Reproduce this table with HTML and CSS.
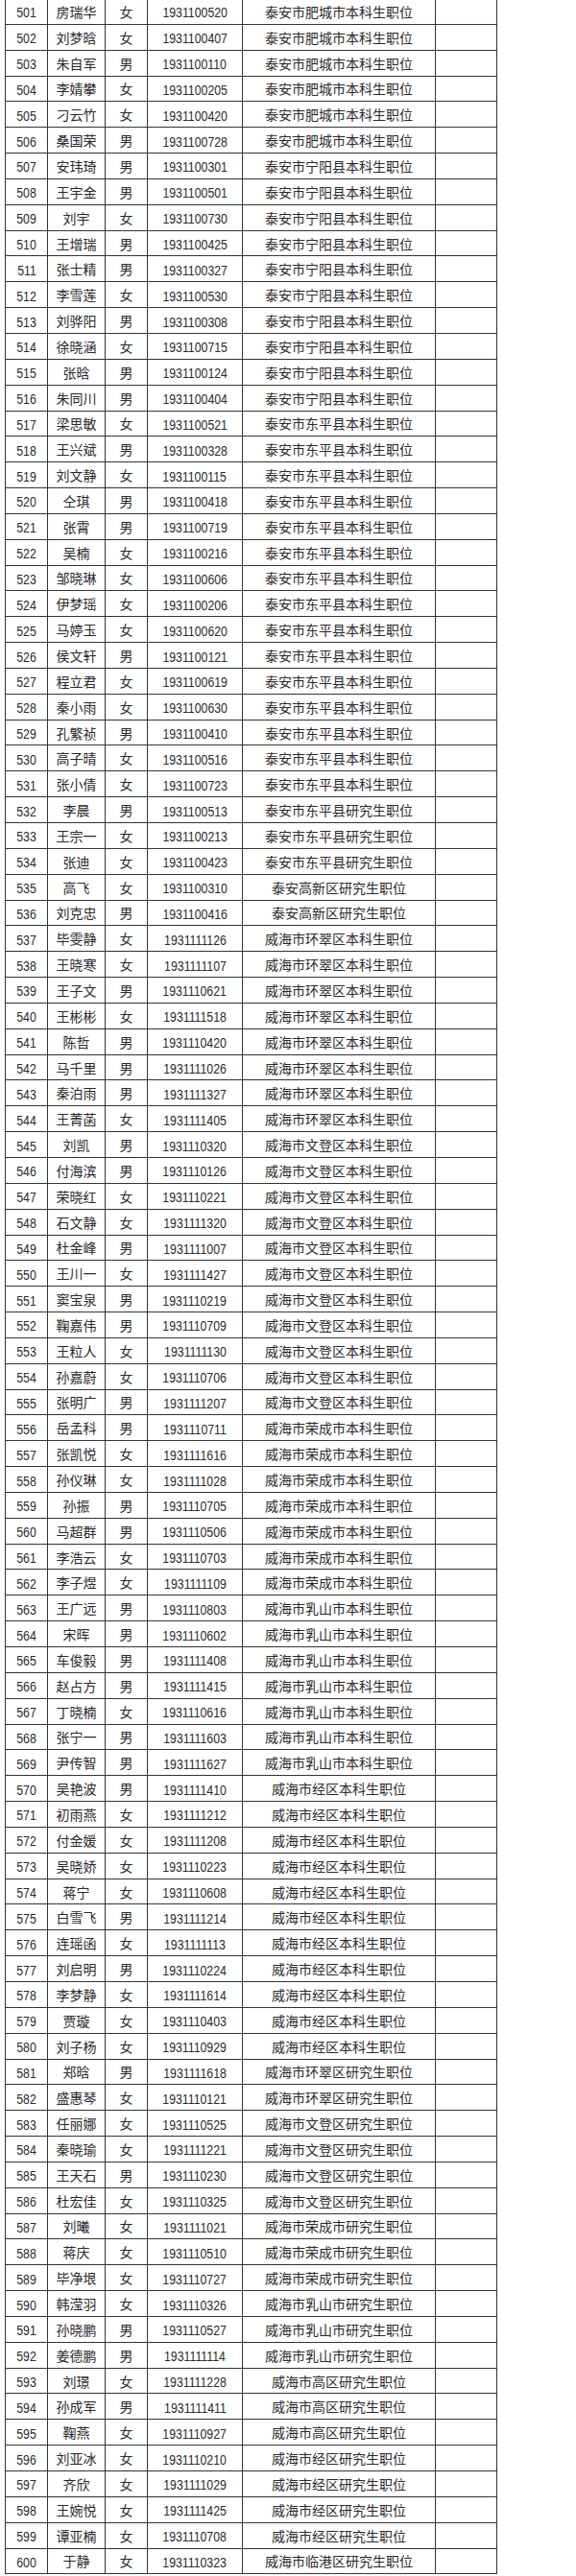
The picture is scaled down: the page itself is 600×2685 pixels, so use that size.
FILE: index.html
```html
<!DOCTYPE html>
<html lang="zh-CN">
<head>
<meta charset="utf-8">
<title>名单</title>
<link rel="stylesheet" href="styles.css">
</head>
<body>
<table class="list">
<colgroup><col class="c1"><col class="c2"><col class="c3"><col class="c4"><col class="c5"><col class="c6"></colgroup>
<tbody>
<tr><td class="n"><span>501</span></td><td>房瑞华</td><td>女</td><td class="n"><span>1931100520</span></td><td>泰安市肥城市本科生职位</td><td></td></tr>
<tr><td class="n"><span>502</span></td><td>刘梦晗</td><td>女</td><td class="n"><span>1931100407</span></td><td>泰安市肥城市本科生职位</td><td></td></tr>
<tr><td class="n"><span>503</span></td><td>朱自军</td><td>男</td><td class="n"><span>1931100110</span></td><td>泰安市肥城市本科生职位</td><td></td></tr>
<tr><td class="n"><span>504</span></td><td>李婧攀</td><td>女</td><td class="n"><span>1931100205</span></td><td>泰安市肥城市本科生职位</td><td></td></tr>
<tr><td class="n"><span>505</span></td><td>刁云竹</td><td>女</td><td class="n"><span>1931100420</span></td><td>泰安市肥城市本科生职位</td><td></td></tr>
<tr><td class="n"><span>506</span></td><td>桑国荣</td><td>男</td><td class="n"><span>1931100728</span></td><td>泰安市肥城市本科生职位</td><td></td></tr>
<tr><td class="n"><span>507</span></td><td>安玮琦</td><td>男</td><td class="n"><span>1931100301</span></td><td>泰安市宁阳县本科生职位</td><td></td></tr>
<tr><td class="n"><span>508</span></td><td>王宇金</td><td>男</td><td class="n"><span>1931100501</span></td><td>泰安市宁阳县本科生职位</td><td></td></tr>
<tr><td class="n"><span>509</span></td><td>刘宇</td><td>女</td><td class="n"><span>1931100730</span></td><td>泰安市宁阳县本科生职位</td><td></td></tr>
<tr><td class="n"><span>510</span></td><td>王增瑞</td><td>男</td><td class="n"><span>1931100425</span></td><td>泰安市宁阳县本科生职位</td><td></td></tr>
<tr><td class="n"><span>511</span></td><td>张士精</td><td>男</td><td class="n"><span>1931100327</span></td><td>泰安市宁阳县本科生职位</td><td></td></tr>
<tr><td class="n"><span>512</span></td><td>李雪莲</td><td>女</td><td class="n"><span>1931100530</span></td><td>泰安市宁阳县本科生职位</td><td></td></tr>
<tr><td class="n"><span>513</span></td><td>刘骅阳</td><td>男</td><td class="n"><span>1931100308</span></td><td>泰安市宁阳县本科生职位</td><td></td></tr>
<tr><td class="n"><span>514</span></td><td>徐晓涵</td><td>女</td><td class="n"><span>1931100715</span></td><td>泰安市宁阳县本科生职位</td><td></td></tr>
<tr><td class="n"><span>515</span></td><td>张晗</td><td>男</td><td class="n"><span>1931100124</span></td><td>泰安市宁阳县本科生职位</td><td></td></tr>
<tr><td class="n"><span>516</span></td><td>朱同川</td><td>男</td><td class="n"><span>1931100404</span></td><td>泰安市宁阳县本科生职位</td><td></td></tr>
<tr><td class="n"><span>517</span></td><td>梁思敏</td><td>女</td><td class="n"><span>1931100521</span></td><td>泰安市东平县本科生职位</td><td></td></tr>
<tr><td class="n"><span>518</span></td><td>王兴斌</td><td>男</td><td class="n"><span>1931100328</span></td><td>泰安市东平县本科生职位</td><td></td></tr>
<tr><td class="n"><span>519</span></td><td>刘文静</td><td>女</td><td class="n"><span>1931100115</span></td><td>泰安市东平县本科生职位</td><td></td></tr>
<tr><td class="n"><span>520</span></td><td>仝琪</td><td>男</td><td class="n"><span>1931100418</span></td><td>泰安市东平县本科生职位</td><td></td></tr>
<tr><td class="n"><span>521</span></td><td>张霄</td><td>男</td><td class="n"><span>1931100719</span></td><td>泰安市东平县本科生职位</td><td></td></tr>
<tr><td class="n"><span>522</span></td><td>吴楠</td><td>女</td><td class="n"><span>1931100216</span></td><td>泰安市东平县本科生职位</td><td></td></tr>
<tr><td class="n"><span>523</span></td><td>邹晓琳</td><td>女</td><td class="n"><span>1931100606</span></td><td>泰安市东平县本科生职位</td><td></td></tr>
<tr><td class="n"><span>524</span></td><td>伊梦瑶</td><td>女</td><td class="n"><span>1931100206</span></td><td>泰安市东平县本科生职位</td><td></td></tr>
<tr><td class="n"><span>525</span></td><td>马婷玉</td><td>女</td><td class="n"><span>1931100620</span></td><td>泰安市东平县本科生职位</td><td></td></tr>
<tr><td class="n"><span>526</span></td><td>侯文轩</td><td>男</td><td class="n"><span>1931100121</span></td><td>泰安市东平县本科生职位</td><td></td></tr>
<tr><td class="n"><span>527</span></td><td>程立君</td><td>女</td><td class="n"><span>1931100619</span></td><td>泰安市东平县本科生职位</td><td></td></tr>
<tr><td class="n"><span>528</span></td><td>秦小雨</td><td>女</td><td class="n"><span>1931100630</span></td><td>泰安市东平县本科生职位</td><td></td></tr>
<tr><td class="n"><span>529</span></td><td>孔繁祯</td><td>男</td><td class="n"><span>1931100410</span></td><td>泰安市东平县本科生职位</td><td></td></tr>
<tr><td class="n"><span>530</span></td><td>高子晴</td><td>女</td><td class="n"><span>1931100516</span></td><td>泰安市东平县本科生职位</td><td></td></tr>
<tr><td class="n"><span>531</span></td><td>张小倩</td><td>女</td><td class="n"><span>1931100723</span></td><td>泰安市东平县本科生职位</td><td></td></tr>
<tr><td class="n"><span>532</span></td><td>李晨</td><td>男</td><td class="n"><span>1931100513</span></td><td>泰安市东平县研究生职位</td><td></td></tr>
<tr><td class="n"><span>533</span></td><td>王宗一</td><td>女</td><td class="n"><span>1931100213</span></td><td>泰安市东平县研究生职位</td><td></td></tr>
<tr><td class="n"><span>534</span></td><td>张迪</td><td>女</td><td class="n"><span>1931100423</span></td><td>泰安市东平县研究生职位</td><td></td></tr>
<tr><td class="n"><span>535</span></td><td>高飞</td><td>女</td><td class="n"><span>1931100310</span></td><td>泰安高新区研究生职位</td><td></td></tr>
<tr><td class="n"><span>536</span></td><td>刘克忠</td><td>男</td><td class="n"><span>1931100416</span></td><td>泰安高新区研究生职位</td><td></td></tr>
<tr><td class="n"><span>537</span></td><td>毕雯静</td><td>女</td><td class="n"><span>1931111126</span></td><td>威海市环翠区本科生职位</td><td></td></tr>
<tr><td class="n"><span>538</span></td><td>王晓寒</td><td>女</td><td class="n"><span>1931111107</span></td><td>威海市环翠区本科生职位</td><td></td></tr>
<tr><td class="n"><span>539</span></td><td>王子文</td><td>男</td><td class="n"><span>1931110621</span></td><td>威海市环翠区本科生职位</td><td></td></tr>
<tr><td class="n"><span>540</span></td><td>王彬彬</td><td>女</td><td class="n"><span>1931111518</span></td><td>威海市环翠区本科生职位</td><td></td></tr>
<tr><td class="n"><span>541</span></td><td>陈哲</td><td>男</td><td class="n"><span>1931110420</span></td><td>威海市环翠区本科生职位</td><td></td></tr>
<tr><td class="n"><span>542</span></td><td>马千里</td><td>男</td><td class="n"><span>1931111026</span></td><td>威海市环翠区本科生职位</td><td></td></tr>
<tr><td class="n"><span>543</span></td><td>秦泊雨</td><td>男</td><td class="n"><span>1931111327</span></td><td>威海市环翠区本科生职位</td><td></td></tr>
<tr><td class="n"><span>544</span></td><td>王菁菡</td><td>女</td><td class="n"><span>1931111405</span></td><td>威海市环翠区本科生职位</td><td></td></tr>
<tr><td class="n"><span>545</span></td><td>刘凯</td><td>男</td><td class="n"><span>1931110320</span></td><td>威海市文登区本科生职位</td><td></td></tr>
<tr><td class="n"><span>546</span></td><td>付海滨</td><td>男</td><td class="n"><span>1931110126</span></td><td>威海市文登区本科生职位</td><td></td></tr>
<tr><td class="n"><span>547</span></td><td>荣晓红</td><td>女</td><td class="n"><span>1931110221</span></td><td>威海市文登区本科生职位</td><td></td></tr>
<tr><td class="n"><span>548</span></td><td>石文静</td><td>女</td><td class="n"><span>1931111320</span></td><td>威海市文登区本科生职位</td><td></td></tr>
<tr><td class="n"><span>549</span></td><td>杜金峰</td><td>男</td><td class="n"><span>1931111007</span></td><td>威海市文登区本科生职位</td><td></td></tr>
<tr><td class="n"><span>550</span></td><td>王川一</td><td>女</td><td class="n"><span>1931111427</span></td><td>威海市文登区本科生职位</td><td></td></tr>
<tr><td class="n"><span>551</span></td><td>窦宝泉</td><td>男</td><td class="n"><span>1931110219</span></td><td>威海市文登区本科生职位</td><td></td></tr>
<tr><td class="n"><span>552</span></td><td>鞠嘉伟</td><td>男</td><td class="n"><span>1931110709</span></td><td>威海市文登区本科生职位</td><td></td></tr>
<tr><td class="n"><span>553</span></td><td>王粒人</td><td>女</td><td class="n"><span>1931111130</span></td><td>威海市文登区本科生职位</td><td></td></tr>
<tr><td class="n"><span>554</span></td><td>孙嘉蔚</td><td>女</td><td class="n"><span>1931110706</span></td><td>威海市文登区本科生职位</td><td></td></tr>
<tr><td class="n"><span>555</span></td><td>张明广</td><td>男</td><td class="n"><span>1931111207</span></td><td>威海市文登区本科生职位</td><td></td></tr>
<tr><td class="n"><span>556</span></td><td>岳孟科</td><td>男</td><td class="n"><span>1931110711</span></td><td>威海市荣成市本科生职位</td><td></td></tr>
<tr><td class="n"><span>557</span></td><td>张凯悦</td><td>女</td><td class="n"><span>1931111616</span></td><td>威海市荣成市本科生职位</td><td></td></tr>
<tr><td class="n"><span>558</span></td><td>孙仪琳</td><td>女</td><td class="n"><span>1931111028</span></td><td>威海市荣成市本科生职位</td><td></td></tr>
<tr><td class="n"><span>559</span></td><td>孙振</td><td>男</td><td class="n"><span>1931110705</span></td><td>威海市荣成市本科生职位</td><td></td></tr>
<tr><td class="n"><span>560</span></td><td>马超群</td><td>男</td><td class="n"><span>1931110506</span></td><td>威海市荣成市本科生职位</td><td></td></tr>
<tr><td class="n"><span>561</span></td><td>李浩云</td><td>女</td><td class="n"><span>1931110703</span></td><td>威海市荣成市本科生职位</td><td></td></tr>
<tr><td class="n"><span>562</span></td><td>李子煜</td><td>女</td><td class="n"><span>1931111109</span></td><td>威海市荣成市本科生职位</td><td></td></tr>
<tr><td class="n"><span>563</span></td><td>王广远</td><td>男</td><td class="n"><span>1931110803</span></td><td>威海市乳山市本科生职位</td><td></td></tr>
<tr><td class="n"><span>564</span></td><td>宋晖</td><td>男</td><td class="n"><span>1931110602</span></td><td>威海市乳山市本科生职位</td><td></td></tr>
<tr><td class="n"><span>565</span></td><td>车俊毅</td><td>男</td><td class="n"><span>1931111408</span></td><td>威海市乳山市本科生职位</td><td></td></tr>
<tr><td class="n"><span>566</span></td><td>赵占方</td><td>男</td><td class="n"><span>1931111415</span></td><td>威海市乳山市本科生职位</td><td></td></tr>
<tr><td class="n"><span>567</span></td><td>丁晓楠</td><td>女</td><td class="n"><span>1931110616</span></td><td>威海市乳山市本科生职位</td><td></td></tr>
<tr><td class="n"><span>568</span></td><td>张宁一</td><td>男</td><td class="n"><span>1931111603</span></td><td>威海市乳山市本科生职位</td><td></td></tr>
<tr><td class="n"><span>569</span></td><td>尹传智</td><td>男</td><td class="n"><span>1931111627</span></td><td>威海市乳山市本科生职位</td><td></td></tr>
<tr><td class="n"><span>570</span></td><td>吴艳波</td><td>男</td><td class="n"><span>1931111410</span></td><td>威海市经区本科生职位</td><td></td></tr>
<tr><td class="n"><span>571</span></td><td>初雨燕</td><td>女</td><td class="n"><span>1931111212</span></td><td>威海市经区本科生职位</td><td></td></tr>
<tr><td class="n"><span>572</span></td><td>付金媛</td><td>女</td><td class="n"><span>1931111208</span></td><td>威海市经区本科生职位</td><td></td></tr>
<tr><td class="n"><span>573</span></td><td>吴晓娇</td><td>女</td><td class="n"><span>1931110223</span></td><td>威海市经区本科生职位</td><td></td></tr>
<tr><td class="n"><span>574</span></td><td>蒋宁</td><td>女</td><td class="n"><span>1931110608</span></td><td>威海市经区本科生职位</td><td></td></tr>
<tr><td class="n"><span>575</span></td><td>白雪飞</td><td>男</td><td class="n"><span>1931111214</span></td><td>威海市经区本科生职位</td><td></td></tr>
<tr><td class="n"><span>576</span></td><td>连瑶函</td><td>女</td><td class="n"><span>1931111113</span></td><td>威海市经区本科生职位</td><td></td></tr>
<tr><td class="n"><span>577</span></td><td>刘启明</td><td>男</td><td class="n"><span>1931110224</span></td><td>威海市经区本科生职位</td><td></td></tr>
<tr><td class="n"><span>578</span></td><td>李梦静</td><td>女</td><td class="n"><span>1931111614</span></td><td>威海市经区本科生职位</td><td></td></tr>
<tr><td class="n"><span>579</span></td><td>贾璇</td><td>女</td><td class="n"><span>1931110403</span></td><td>威海市经区本科生职位</td><td></td></tr>
<tr><td class="n"><span>580</span></td><td>刘子杨</td><td>女</td><td class="n"><span>1931110929</span></td><td>威海市经区本科生职位</td><td></td></tr>
<tr><td class="n"><span>581</span></td><td>郑晗</td><td>男</td><td class="n"><span>1931111618</span></td><td>威海市环翠区研究生职位</td><td></td></tr>
<tr><td class="n"><span>582</span></td><td>盛惠琴</td><td>女</td><td class="n"><span>1931110121</span></td><td>威海市环翠区研究生职位</td><td></td></tr>
<tr><td class="n"><span>583</span></td><td>任丽娜</td><td>女</td><td class="n"><span>1931110525</span></td><td>威海市文登区研究生职位</td><td></td></tr>
<tr><td class="n"><span>584</span></td><td>秦晓瑜</td><td>女</td><td class="n"><span>1931111221</span></td><td>威海市文登区研究生职位</td><td></td></tr>
<tr><td class="n"><span>585</span></td><td>王天石</td><td>男</td><td class="n"><span>1931110230</span></td><td>威海市文登区研究生职位</td><td></td></tr>
<tr><td class="n"><span>586</span></td><td>杜宏佳</td><td>女</td><td class="n"><span>1931110325</span></td><td>威海市文登区研究生职位</td><td></td></tr>
<tr><td class="n"><span>587</span></td><td>刘曦</td><td>女</td><td class="n"><span>1931111021</span></td><td>威海市荣成市研究生职位</td><td></td></tr>
<tr><td class="n"><span>588</span></td><td>蒋庆</td><td>女</td><td class="n"><span>1931110510</span></td><td>威海市荣成市研究生职位</td><td></td></tr>
<tr><td class="n"><span>589</span></td><td>毕净垠</td><td>女</td><td class="n"><span>1931110727</span></td><td>威海市荣成市研究生职位</td><td></td></tr>
<tr><td class="n"><span>590</span></td><td>韩滢羽</td><td>女</td><td class="n"><span>1931110326</span></td><td>威海市乳山市研究生职位</td><td></td></tr>
<tr><td class="n"><span>591</span></td><td>孙晓鹏</td><td>男</td><td class="n"><span>1931110527</span></td><td>威海市乳山市研究生职位</td><td></td></tr>
<tr><td class="n"><span>592</span></td><td>姜德鹏</td><td>男</td><td class="n"><span>1931111114</span></td><td>威海市乳山市研究生职位</td><td></td></tr>
<tr><td class="n"><span>593</span></td><td>刘璟</td><td>女</td><td class="n"><span>1931111228</span></td><td>威海市高区研究生职位</td><td></td></tr>
<tr><td class="n"><span>594</span></td><td>孙成军</td><td>男</td><td class="n"><span>1931111411</span></td><td>威海市高区研究生职位</td><td></td></tr>
<tr><td class="n"><span>595</span></td><td>鞠燕</td><td>女</td><td class="n"><span>1931110927</span></td><td>威海市高区研究生职位</td><td></td></tr>
<tr><td class="n"><span>596</span></td><td>刘亚冰</td><td>女</td><td class="n"><span>1931110210</span></td><td>威海市经区研究生职位</td><td></td></tr>
<tr><td class="n"><span>597</span></td><td>齐欣</td><td>女</td><td class="n"><span>1931111029</span></td><td>威海市经区研究生职位</td><td></td></tr>
<tr><td class="n"><span>598</span></td><td>王婉悦</td><td>女</td><td class="n"><span>1931111425</span></td><td>威海市经区研究生职位</td><td></td></tr>
<tr><td class="n"><span>599</span></td><td>谭亚楠</td><td>女</td><td class="n"><span>1931110708</span></td><td>威海市经区研究生职位</td><td></td></tr>
<tr><td class="n"><span>600</span></td><td>于静</td><td>女</td><td class="n"><span>1931110323</span></td><td>威海市临港区研究生职位</td><td></td></tr>
</tbody>
</table>
</body>
</html>
```
FILE: styles.css
```css
html, body {
  margin: 0;
  padding: 0;
  background: #fff;
}
body {
  overflow: hidden;
}
.list {
  border-collapse: collapse;
  table-layout: fixed;
  width: 512px;
  margin: -2px 0 0 5px;
  font-family: "Noto Sans CJK SC", sans-serif;
  font-size: 14px;
  color: #2a2a2a;
}
.c1 { width: 44px; }
.c2 { width: 60px; }
.c3 { width: 44px; }
.c4 { width: 99px; }
.c5 { width: 201px; }
.c6 { width: 64px; }
.list tr {
  height: 26.85px;
}
.list td {
  border: 1px solid #333;
  padding: 0;
  text-align: center;
  vertical-align: middle;
  line-height: 1;
  white-space: nowrap;
  overflow: hidden;
}
.list td.n {
  font-family: "Liberation Sans", sans-serif;
  font-size: 15px;
  padding-top: 2px;
}
.list td.n span {
  display: inline-block;
  transform: scaleX(0.82);
}
```
